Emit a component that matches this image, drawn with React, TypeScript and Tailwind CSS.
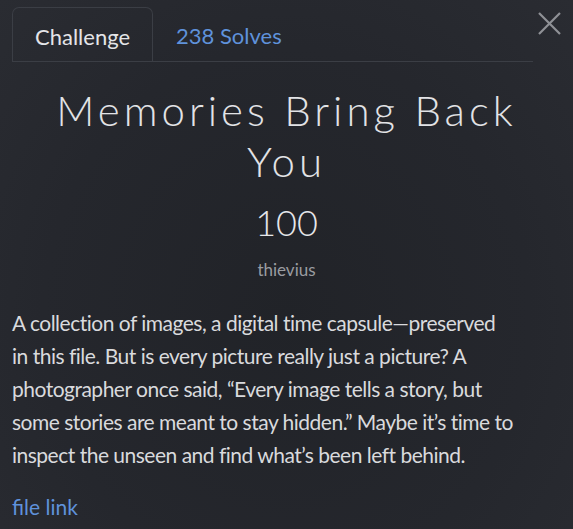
import React from 'react';

const App: React.FC = () => {
  return (
    <div
      className="w-[573px] h-[529px] overflow-hidden bg-[radial-gradient(ellipse_at_50%_60%,#212328_0%,#25272d_60%,#2a2c32_100%)] text-[#dcdde0] px-3 pt-[7px]"
      style={{ fontFamily: 'Lato, "Noto Sans", sans-serif' }}
    >
      <div className="flex items-start">
        <div className="flex-1 flex items-end border-b border-[#3b3e45] mr-[5px]">
          <button className="h-[55px] pt-[3px] px-[22px] -mb-px rounded-t-[7px] border border-b-0 border-[#3b3e45] bg-transparent text-[22px] text-[#e4e5e8]">
            Challenge
          </button>
          <button className="h-[54px] pt-[3px] px-[23px] text-[22px] text-[#5f92db]">238 Solves</button>
        </div>
        <button className="w-[23px] h-[23px] mt-[5px] flex items-center justify-center text-[#8f9196]">
          <svg width="23" height="23" viewBox="0 0 23 23" fill="none" stroke="currentColor" strokeWidth="2.2">
            <path d="M1 1L22 22M22 1L1 22" />
          </svg>
        </button>
      </div>

      <div className="text-center mt-[23px]">
        <h1 className="text-[42px] leading-[51px] font-light tracking-[4px] text-[#e2e3e6] px-[20px]">
          Memories Bring Back You
        </h1>
        <div className="text-[36px] leading-[44px] font-light mt-[13px] text-[#e6e7ea]">100</div>
        <div className="text-[17px] leading-[24px] mt-[14px] text-[#9a9ca1]">thievius</div>
      </div>

      <p className="mt-[24px] max-w-[502px] text-[21px] leading-[33px] tracking-[-0.5px] text-[#d9dadd]">
        A collection of images, a digital time capsule—preserved in this file. But is every picture really
        just a picture? A photographer once said, “Every image tells a story, but some stories are meant to
        stay hidden.” Maybe it’s time to inspect the unseen and find what’s been left behind.
      </p>

      <a className="block mt-[19px] text-[21px] leading-[33px] text-[#5f92db]">file link</a>
    </div>
  );
};

export default App;
